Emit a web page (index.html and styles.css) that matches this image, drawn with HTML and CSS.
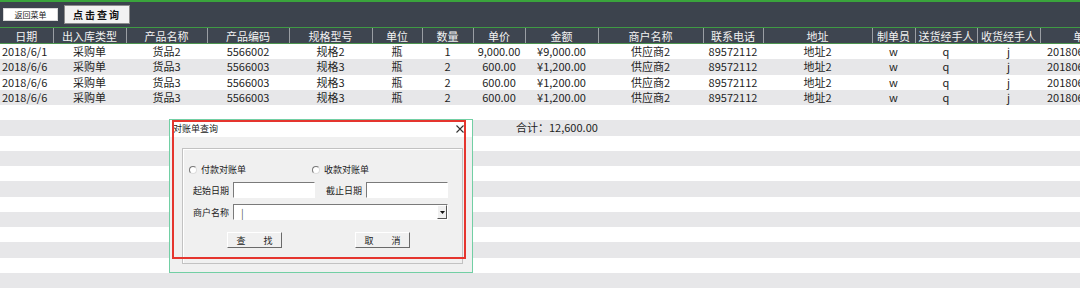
FILE: index.html
```html
<!DOCTYPE html>
<html lang="zh-CN">

<head>
    <meta charset="UTF-8">
    <meta name="viewport" content="width=device-width, initial-scale=1.0">
    <title>出入库明细</title>
    <link rel="stylesheet" href="styles.css">
</head>

<body>
    <div class="topline"></div>
    <div class="toolbar">
        <button class="btn-back">返回菜单</button>
        <button class="btn-query">点击查询</button>
    </div>

    <div class="sheet">
        <table class="grid">
            <colgroup>
                <col style="width:53px"><col style="width:73px"><col style="width:81px"><col style="width:82px">
                <col style="width:83px"><col style="width:50px"><col style="width:51px"><col style="width:52px">
                <col style="width:73px"><col style="width:105px"><col style="width:60px"><col style="width:109px">
                <col style="width:43px"><col style="width:62px"><col style="width:63px"><col style="width:110px">
            </colgroup>
            <tr>
                <th>日期</th><th>出入库类型</th><th>产品名称</th><th>产品编码</th><th>规格型号</th><th>单位</th>
                <th>数量</th><th>单价</th><th>金额</th><th>商户名称</th><th>联系电话</th><th>地址</th>
                <th>制单员</th><th>送货经手人</th><th>收货经手人</th><th>单据编号</th>
            </tr>
            <tr>
                <td class="date">2018/6/1</td><td>采购单</td><td>货品2</td><td>5566002</td><td>规格2</td><td>瓶</td>
                <td>1</td><td>9,000.00</td><td>¥9,000.00</td><td>供应商2</td><td>89572112</td><td>地址2</td>
                <td>w</td><td>q</td><td>j</td><td class="no">201806010001</td>
            </tr>
            <tr>
                <td class="date">2018/6/6</td><td>采购单</td><td>货品3</td><td>5566003</td><td>规格3</td><td>瓶</td>
                <td>2</td><td>600.00</td><td>¥1,200.00</td><td>供应商2</td><td>89572112</td><td>地址2</td>
                <td>w</td><td>q</td><td>j</td><td class="no">201806060001</td>
            </tr>
            <tr>
                <td class="date">2018/6/6</td><td>采购单</td><td>货品3</td><td>5566003</td><td>规格3</td><td>瓶</td>
                <td>2</td><td>600.00</td><td>¥1,200.00</td><td>供应商2</td><td>89572112</td><td>地址2</td>
                <td>w</td><td>q</td><td>j</td><td class="no">201806060002</td>
            </tr>
            <tr>
                <td class="date">2018/6/6</td><td>采购单</td><td>货品3</td><td>5566003</td><td>规格3</td><td>瓶</td>
                <td>2</td><td>600.00</td><td>¥1,200.00</td><td>供应商2</td><td>89572112</td><td>地址2</td>
                <td>w</td><td>q</td><td>j</td><td class="no">201806060003</td>
            </tr>
        </table>

        <div class="filler">
            <div class="row"></div>
            <div class="row total">合计：12,600.00</div>
            <div class="row"></div>
            <div class="row"></div>
            <div class="row"></div>
            <div class="row"></div>
            <div class="row"></div>
            <div class="row"></div>
            <div class="row"></div>
            <div class="row"></div>
            <div class="row"></div>
            <div class="row"></div>
        </div>

        <!-- 对账单查询 dialog -->
        <div class="dialog">
            <div class="dlg-title">
                <span>对账单查询</span>
                <svg class="close" width="8" height="8" viewBox="0 0 8 8">
                    <path d="M0.5 0.5 L7.5 7.5 M7.5 0.5 L0.5 7.5" stroke="#333" stroke-width="1.1" fill="none" />
                </svg>
            </div>
            <div class="group">
                <div class="line radios">
                    <label class="radio"><span class="dot"></span>付款对账单</label>
                    <label class="radio"><span class="dot"></span>收款对账单</label>
                </div>
                <div class="line dates">
                    <span class="lbl">起始日期</span>
                    <span class="field"></span>
                    <span class="lbl lbl-end">截止日期</span>
                    <span class="field"></span>
                </div>
                <div class="line merchant">
                    <span class="lbl">商户名称</span>
                    <span class="combo">
                        <span class="caret">|</span>
                        <span class="arrow">
                            <svg width="5" height="3" viewBox="0 0 5 3"><path d="M0 0 H5 L2.5 3 Z" fill="#111" /></svg>
                        </span>
                    </span>
                </div>
                <div class="line actions">
                    <button class="win-btn">查　　找</button>
                    <button class="win-btn btn-cancel">取　　消</button>
                </div>
            </div>
            <div class="mark"></div>
        </div>
    </div>
</body>

</html>
```

FILE: styles.css
```css
body {
    margin: 0;
    width: 1080px;
    height: 293px;
    overflow: hidden;
    background: #fff;
    font-family: 'Noto Sans CJK SC', 'Noto Sans', sans-serif;
    color: #1e1e1e;
}

.topline {
    height: 2px;
    background: #3aa43c;
}

.toolbar {
    height: 26px;
    background: #3c434d;
    border-bottom: 1px solid #3f9a43;
    display: flex;
    align-items: center;
    box-sizing: border-box;
    padding-left: 3px;
}

.toolbar button {
    font-family: inherit;
    padding: 0;
    cursor: pointer;
}

.btn-back {
    width: 55px;
    height: 13px;
    font-size: 8px;
    line-height: 11px;
    background: #fff;
    border: 1px solid #d8d8d8;
    color: #222;
}

.btn-query {
    width: 66px;
    height: 19px;
    margin-left: 6px;
    font-size: 10px;
    font-weight: bold;
    letter-spacing: 2px;
    background: #f2f2f2;
    border: 1px solid #8d8d8d;
    color: #111;
}

.sheet {
    position: relative;
}

/* data grid */
.grid {
    table-layout: fixed;
    border-collapse: collapse;
    width: 1150px;
    font-size: 11px;
}

.grid th,
.grid td {
    padding: 0;
    text-align: center;
    white-space: nowrap;
    overflow: hidden;
}

.grid th {
    height: 15px;
    line-height: 14px;
    background: #3e4550;
    color: #f2f2f2;
    font-weight: normal;
    border-left: 1px solid #9a9ea4;
    border-bottom: 1px solid #4d9550;
}

.grid th:first-child {
    border-left: none;
}

.grid td {
    height: 15.25px;
    line-height: 15px;
}

.grid tr:nth-child(odd) td {
    background: #e7e7e9;
}

.grid td.date {
    text-align: left;
    padding-left: 2px;
}

.grid td.no {
    text-align: left;
    padding-left: 7px;
}

.filler .row {
    height: 15.25px;
    font-size: 11px;
    line-height: 15px;
}

.filler .row:nth-child(even) {
    background: #e7e7e9;
}

.filler .total {
    padding-left: 516px;
}

/* dialog */
.dialog {
    position: absolute;
    left: 169px;
    top: 91px;
    width: 304px;
    height: 154px;
    box-sizing: border-box;
    border: 1px solid #72cfa4;
    background: #f0f0f0;
    font-size: 9px;
    color: #222;
}

.dlg-title {
    height: 17px;
    background: #fff;
    display: flex;
    align-items: center;
    justify-content: space-between;
    padding: 0 8px 0 3px;
    line-height: 17px;
}

.dlg-title .close {
    margin-top: 1px;
}

.group {
    margin: 11px 0 0 12px;
    width: 281px;
    height: 116px;
    box-sizing: border-box;
    border: 1px solid #c2c2c2;
    box-shadow: inset 1px 1px #fff;
}

.line {
    display: flex;
    align-items: center;
}

.radios {
    margin-top: 15px;
    padding-left: 6px;
    height: 11px;
}

.radio {
    width: 123px;
    display: flex;
    align-items: center;
}

.dot {
    width: 6px;
    height: 6px;
    border-radius: 50%;
    border: 1px solid #777;
    border-right-color: #ddd;
    border-bottom-color: #ddd;
    background: #fff;
    margin-right: 4px;
}

.dates {
    margin-top: 7px;
    height: 16px;
}

.lbl {
    width: 40px;
    padding-left: 10px;
    flex: none;
}

.lbl-end {
    padding-left: 11px;
}

.field {
    width: 82px;
    height: 16px;
    box-sizing: border-box;
    background: #fff;
    border: 1px solid #fff;
    border-top-color: #7a7a7a;
    border-left-color: #7a7a7a;
}

.merchant {
    margin-top: 6px;
    height: 16px;
}

.combo {
    width: 215px;
    height: 16px;
    box-sizing: border-box;
    background: #fff;
    border: 1px solid #fff;
    border-top-color: #7a7a7a;
    border-left-color: #7a7a7a;
    display: flex;
    align-items: center;
    justify-content: space-between;
}

.caret {
    padding-left: 7px;
    color: #555;
    font-size: 10px;
}

.arrow {
    width: 10px;
    height: 14px;
    box-sizing: border-box;
    background: #f0f0f0;
    border: 1px solid #fff;
    border-right-color: #555;
    border-bottom-color: #555;
    display: flex;
    align-items: center;
    justify-content: center;
}

.actions {
    margin-top: 12px;
    padding-left: 44px;
    height: 16px;
}

.win-btn {
    width: 55px;
    height: 16px;
    padding: 0;
    font-family: inherit;
    font-size: 9px;
    color: #222;
    background: #f0f0f0;
    border: 1px solid #fff;
    border-right-color: #6a6a6a;
    border-bottom-color: #6a6a6a;
}

.btn-cancel {
    margin-left: 73px;
}

/* red highlight drawn over the dialog */
.mark {
    position: absolute;
    left: 2px;
    top: 0;
    width: 294px;
    height: 139px;
    box-sizing: border-box;
    border: 2px solid #e5352e;
    pointer-events: none;
}
```
